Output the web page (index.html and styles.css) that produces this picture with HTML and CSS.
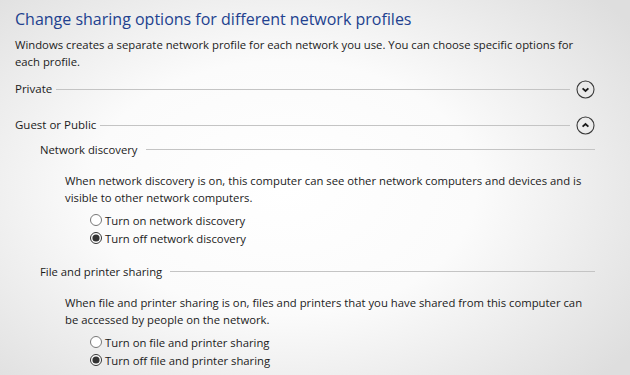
FILE: index.html
```html
<!DOCTYPE html>
<html lang="en">
<head>
    <meta charset="UTF-8">
    <title>Advanced sharing settings</title>
    <link rel="stylesheet" href="styles.css">
</head>
<body>
    <div class="page">
        <h1 class="title">Change sharing options for different network profiles</h1>
        <p class="intro">Windows creates a separate network profile for each network you use. You can choose specific options for each profile.</p>

        <div class="profile">
            <span class="profile-name">Private</span>
            <span class="rule"></span>
            <button class="toggle" aria-label="Expand">
                <svg width="19" height="19" viewBox="0 0 19 19">
                    <circle cx="9.5" cy="9.5" r="8.5" fill="none" stroke="#3a3a3a" stroke-width="1.1"/>
                    <path d="M6.6 8.3 L9.5 11 L12.4 8.3" fill="none" stroke="#1a1a1a" stroke-width="1.8"/>
                </svg>
            </button>
        </div>

        <div class="profile">
            <span class="profile-name">Guest or Public</span>
            <span class="rule"></span>
            <button class="toggle" aria-label="Collapse">
                <svg width="19" height="19" viewBox="0 0 19 19">
                    <circle cx="9.5" cy="9.5" r="8.5" fill="none" stroke="#3a3a3a" stroke-width="1.1"/>
                    <path d="M6.6 10.7 L9.5 8 L12.4 10.7" fill="none" stroke="#1a1a1a" stroke-width="1.8"/>
                </svg>
            </button>
        </div>

        <div class="group">
            <div class="group-head">
                <span>Network discovery</span>
                <span class="rule"></span>
            </div>
            <p class="group-text">When network discovery is on, this computer can see other network computers and devices and is visible to other network computers.</p>
            <label class="option"><input type="radio" name="discovery"> Turn on network discovery</label>
            <label class="option"><input type="radio" name="discovery" checked> Turn off network discovery</label>
        </div>

        <div class="group">
            <div class="group-head">
                <span>File and printer sharing</span>
                <span class="rule"></span>
            </div>
            <p class="group-text">When file and printer sharing is on, files and printers that you have shared from this computer can be accessed by people on the network.</p>
            <label class="option"><input type="radio" name="sharing"> Turn on file and printer sharing</label>
            <label class="option"><input type="radio" name="sharing" checked> Turn off file and printer sharing</label>
        </div>
    </div>
</body>
</html>
```

FILE: styles.css
```css
* {
    margin: 0;
    padding: 0;
    box-sizing: border-box;
}

html, body {
    height: 100%;
}

body {
    font-family: 'Open Sans', 'Noto Sans', sans-serif;
    font-size: 11.3px;
    color: #1b1b1b;
    background: radial-gradient(ellipse 68% 75% at 45% 50%, #ffffff 0%, #fbfbfb 45%, #dedede 100%);
    overflow: hidden;
}

.page {
    padding: 8px 35px 0 15px;
}

.title {
    font-size: 16px;
    font-weight: 400;
    line-height: 22px;
    color: #22418f;
}

.intro {
    margin-top: 6px;
    line-height: 17px;
}

.profile {
    display: flex;
    align-items: center;
    height: 19px;
    margin-top: 10px;
}

.profile + .profile {
    margin-top: 17px;
}

.profile-name {
    font-size: 11.5px;
    margin-top: -3px;
}

.rule {
    flex: 1;
    height: 1px;
    background: #c4c4c4;
    margin: 0 6px 0 4px;
}

.toggle {
    width: 19px;
    height: 19px;
    border: none;
    background: none;
    display: flex;
}

.group {
    padding-left: 25px;
}

.group-head {
    display: flex;
    align-items: center;
    margin-top: 6px;
    line-height: 17px;
}

.group-head .rule {
    margin: 0 0 0 8px;
}

.group-text {
    margin: 15px 0 5px 25px;
    line-height: 16.5px;
}

.option {
    display: flex;
    align-items: center;
    margin-left: 50px;
    height: 18px;
}

.option input {
    width: 12px;
    height: 12px;
    margin: 0 3px 0 0;
    accent-color: #333;
}

.group + .group .group-head {
    margin-top: 16px;
}

.group + .group .group-text {
    margin-bottom: 5px;
}
```
